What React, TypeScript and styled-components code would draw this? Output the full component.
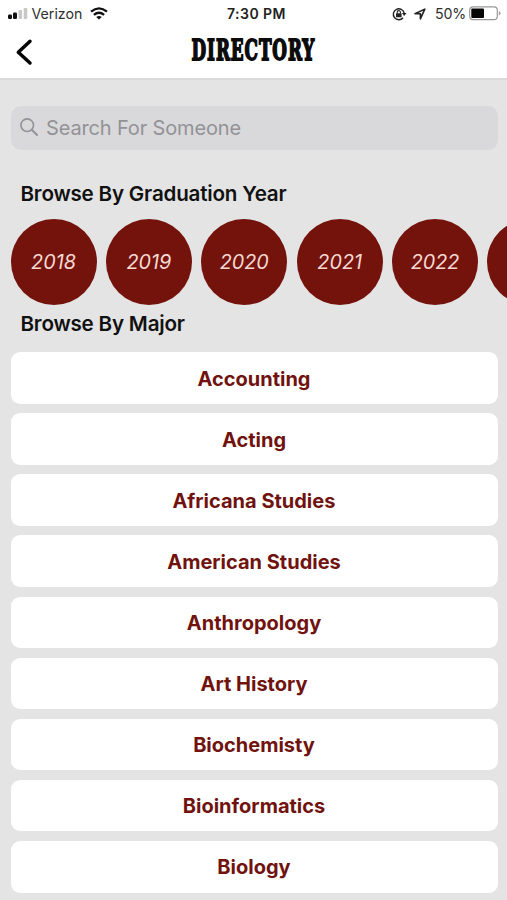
import React from "react";
import styled, { createGlobalStyle } from "styled-components";

const GlobalStyle = createGlobalStyle`
  * { box-sizing: border-box; }
  html, body { margin: 0; padding: 0; background: #e4e4e4; }
  body { overflow: hidden; font-family: Inter, "Liberation Sans", sans-serif; }
  button { font: inherit; border: 0; padding: 0; margin: 0; }
`;

const Screen = styled.main`
  width: 507px;
  height: 900px;
  overflow: hidden;
  background: #e4e4e4;
`;

const Header = styled.header`
  height: 80px;
  background: #fff;
  border-bottom: 2px solid #dadada;
`;

const StatusBar = styled.div`
  display: grid;
  grid-template-columns: 1fr auto 1fr;
  align-items: center;
  height: 27px;
  padding: 0 6px 0 8px;
  font-size: 14.2px;
  color: #303030;
`;

const StatusGroup = styled.div<{ $end?: boolean }>`
  display: flex;
  align-items: center;
  gap: ${(p) => (p.$end ? "7px" : "0")};
  justify-content: ${(p) => (p.$end ? "flex-end" : "flex-start")};
`;

const Carrier = styled.span`
  margin: 0 8px 0 3.5px;
`;

const Clock = styled.time`
  margin-left: 4px;
  font-weight: 600;
  font-size: 14px;
  letter-spacing: 0.45px;
  color: #222;
`;

const Percent = styled.span`
  margin: 0 -4px 0 2px;
  letter-spacing: -0.2px;
`;

const Glyph = styled.svg`
  display: block;
  flex: none;
`;

const NavBar = styled.nav`
  display: grid;
  grid-template-columns: 48px 1fr 48px;
  align-items: center;
  height: 50px;
`;

const BackButton = styled.button`
  display: flex;
  padding-left: 14px;
  background: none;
`;

const Title = styled.h1`
  margin: -5px 0 0;
  justify-self: center;
  font-family: "DejaVu Serif", serif;
  font-size: 27.5px;
  line-height: 44px;
  font-weight: 700;
  letter-spacing: 1.6px;
  color: #0b0b0b;
  -webkit-text-stroke: 1.8px #0b0b0b;
  transform: scaleX(0.61);
`;

const Content = styled.div`
  padding: 26px 0 0 10.5px;
`;

const SearchField = styled.label`
  display: flex;
  align-items: center;
  gap: 7.5px;
  width: 487px;
  height: 44px;
  padding: 0 9px 1px;
  border-radius: 10px;
  background: #d9d9db;
`;

const SearchInput = styled.input`
  flex: 1;
  min-width: 0;
  padding: 0;
  border: 0;
  outline: 0;
  background: none;
  font: 400 20px Inter, sans-serif;
  letter-spacing: -0.15px;
  color: #333;
  &::placeholder { color: #929297; opacity: 1; }
`;

const SectionTitle = styled.h2<{ $top: number }>`
  margin: ${(p) => p.$top}px 0 0 10px;
  font-size: 20.6px;
  line-height: 26px;
  font-weight: 570;
  letter-spacing: -0.2px;
  color: #111;
`;

const YearStrip = styled.div`
  display: flex;
  gap: 9.4px;
  margin-top: 12.4px;
  overflow: hidden;
`;

const YearButton = styled.button`
  flex: none;
  width: 86px;
  height: 86px;
  border-radius: 50%;
  background: #73130c;
  color: #f8d9d2;
  font-size: 19.8px;
  font-style: italic;
`;

const MajorList = styled.div`
  display: grid;
  gap: 9.4px;
  width: 487px;
  margin-top: 14.8px;
`;

const MajorButton = styled.button`
  height: 51.7px;
  padding-top: 1px;
  border-radius: 9px;
  background: #fff;
  color: #70130f;
  font-size: 20px;
  font-weight: 700;
`;

const years = ["2018", "2019", "2020", "2021", "2022"];
const majors = [
  "Accounting",
  "Acting",
  "Africana Studies",
  "American Studies",
  "Anthropology",
  "Art History",
  "Biochemisty",
  "Bioinformatics",
  "Biology",
];

const Signal = () => (
  <Glyph width="20" height="13" viewBox="0 0 20 13">
    <rect x="0" y="7.5" width="4" height="4.5" rx="1.2" fill="#111" />
    <rect x="5" y="5.5" width="4" height="6.5" rx="1.2" fill="#111" />
    <rect x="10.5" y="3" width="3.6" height="9" rx="1" fill="#c8c8c8" />
    <rect x="15.7" y="1" width="3.6" height="11" rx="1" fill="#c8c8c8" />
  </Glyph>
);

const Wifi = () => (
  <Glyph width="18" height="13" viewBox="0 0 18 13" fill="none" stroke="#111" strokeWidth="2.3">
    <path d="M1 4.7Q9-1.9 17 4.7M3.9 7.9q5.1-4.2 10.2 0" />
    <path d="M6.2 10.1q2.8-2.3 5.6 0L9 12.6z" fill="#111" stroke="none" />
  </Glyph>
);

const RotationLock = () => (
  <Glyph width="15" height="14" viewBox="0 0 15 14">
    <path d="M11.1 10.7A5.5 5.5 0 1 1 12.2 6" fill="none" stroke="#222" strokeWidth="1.4" />
    <path d="M9.9 6h4.6l-2.3 3z" fill="#222" />
    <rect x="4" y="6.2" width="5.6" height="4.1" rx=".5" fill="#222" />
    <path d="M5.2 6.5V5.2a1.6 1.6 0 0 1 3.2 0v1.3" fill="none" stroke="#222" strokeWidth="1.1" />
  </Glyph>
);

const Location = () => (
  <Glyph width="12" height="12" viewBox="0 0 12 12">
    <path d="M1 5.7 10.8 1.1 6.4 10.8V5.7z" fill="none" stroke="#222" strokeWidth="1.6" strokeLinejoin="round" />
  </Glyph>
);

const Battery = () => (
  <Glyph width="32" height="15" viewBox="0 0 32 15">
    <rect x=".7" y=".8" width="27.6" height="12.9" rx="3.4" fill="#fff" stroke="#999" strokeWidth="1.2" />
    <rect x="2.3" y="2.5" width="12.7" height="9.5" rx="1" fill="#050505" />
    <path d="M29.9 5v4.5q1.6-.8 1.6-2.25T29.9 5z" fill="#999" />
  </Glyph>
);

export default function App() {
  return (
    <Screen>
      <GlobalStyle />
      <Header>
        <StatusBar>
          <StatusGroup>
            <Signal />
            <Carrier>Verizon</Carrier>
            <Wifi />
          </StatusGroup>
          <Clock>7:30 PM</Clock>
          <StatusGroup $end>
            <RotationLock />
            <Location />
            <Percent>50%</Percent>
            <Battery />
          </StatusGroup>
        </StatusBar>
        <NavBar>
          <BackButton aria-label="Back">
            <Glyph width="20" height="28" viewBox="0 0 20 28">
              <path d="M16 3.3 4.3 14.2 16 25" fill="none" stroke="#050505" strokeWidth="3.5" strokeLinecap="round" strokeLinejoin="round" />
            </Glyph>
          </BackButton>
          <Title>DIRECTORY</Title>
        </NavBar>
      </Header>
      <Content>
        <SearchField>
          <Glyph width="19" height="19" viewBox="0 0 19 19" fill="none" stroke="#929297" strokeWidth="1.6" strokeLinecap="round">
            <circle cx="7.2" cy="7.2" r="6.3" />
            <path d="m12 12 5 5" strokeWidth="2" />
          </Glyph>
          <SearchInput placeholder="Search For Someone" />
        </SearchField>
        <SectionTitle $top={31}>Browse By Graduation Year</SectionTitle>
        <YearStrip>
          {years.map((year) => (
            <YearButton key={year}>{year}</YearButton>
          ))}
          <YearButton aria-label="More years" />
        </YearStrip>
        <SectionTitle $top={6}>Browse By Major</SectionTitle>
        <MajorList>
          {majors.map((major) => (
            <MajorButton key={major}>{major}</MajorButton>
          ))}
        </MajorList>
      </Content>
    </Screen>
  );
}
